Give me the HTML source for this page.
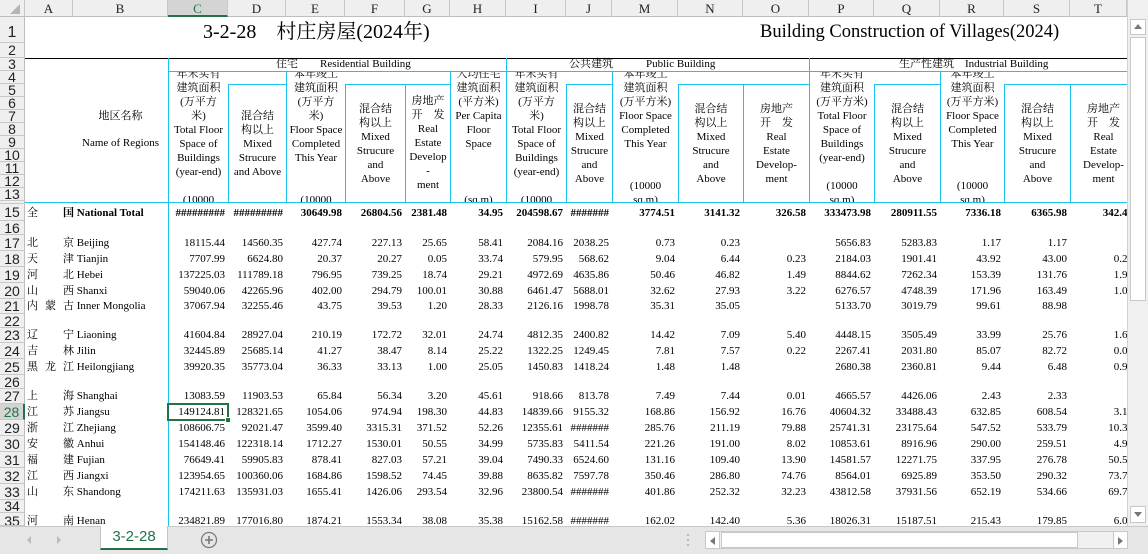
<!DOCTYPE html>
<html><head><meta charset="utf-8">
<style>
*{margin:0;padding:0;box-sizing:border-box}
html,body{width:1148px;height:554px;overflow:hidden}
body{background:#fff;position:relative;font-family:"Liberation Serif","Noto Serif CJK SC",serif;font-size:11px;color:#000}
.abs{position:absolute}
.ch{position:absolute;top:0;height:17px;background:#efefef;border-right:1px solid #c8c8c8;border-bottom:1px solid #bdbdbd;text-align:center;line-height:17px;font-size:13px;color:#222}
.rh{position:absolute;left:0;width:25px;background:#efefef;border-bottom:1px solid #c8c8c8;border-right:1px solid #bdbdbd;text-align:center;font-family:"Liberation Sans",sans-serif;font-size:14px;color:#222;overflow:hidden;display:flex;align-items:center;justify-content:center}
.sheet{position:absolute;left:25px;top:17px;width:1102px;height:509px;overflow:hidden}
.in{position:absolute;left:-25px;top:-17px;width:1152px;height:526px;overflow:hidden}
.vl{position:absolute;width:1px;background:#1cc3ee}
.hl{position:absolute;height:1px;background:#1cc3ee}
.hc{position:absolute;overflow:hidden}
.hc div{position:absolute;left:0;width:100%;text-align:center;line-height:14px;white-space:nowrap}
.r{position:absolute;left:0;width:1150px;white-space:nowrap}
.r span{position:absolute;top:0;text-align:right}
.r .a{left:27px}.r .b{left:63px;text-align:left}.r .k{left:45px}
.C{left:168px;width:57px}.D{left:228px;width:55px}.E{left:286px;width:56px}.F{left:345px;width:57px}
.G{left:405px;width:42px}.H{left:450px;width:53px}.I{left:506px;width:57px}.J{left:566px;width:43px}
.M{left:612px;width:63px}.N{left:678px;width:62px}.O{left:743px;width:63px}.P{left:809px;width:62px}
.Q{left:874px;width:63px}.R{left:940px;width:61px}.S{left:1004px;width:63px}.T{left:1070px;width:63px}
.bold{font-weight:bold}
</style></head><body>

<div class="ch" style="left:0;width:25px"><svg width="25" height="17" style="position:absolute;left:0;top:0"><polygon points="20,4 20,14 10,14" fill="#b5b5b5"/></svg></div>
<div class="ch" style="left:25px;width:48px">A</div>
<div class="ch" style="left:73px;width:95px">B</div>
<div class="ch" style="left:168px;width:60px;background:#d4d4d4;color:#217346;border-bottom:2px solid #217346">C</div>
<div class="ch" style="left:228px;width:58px">D</div>
<div class="ch" style="left:286px;width:59px">E</div>
<div class="ch" style="left:345px;width:60px">F</div>
<div class="ch" style="left:405px;width:45px">G</div>
<div class="ch" style="left:450px;width:56px">H</div>
<div class="ch" style="left:506px;width:60px">I</div>
<div class="ch" style="left:566px;width:46px">J</div>
<div class="ch" style="left:612px;width:66px">M</div>
<div class="ch" style="left:678px;width:65px">N</div>
<div class="ch" style="left:743px;width:66px">O</div>
<div class="ch" style="left:809px;width:65px">P</div>
<div class="ch" style="left:874px;width:66px">Q</div>
<div class="ch" style="left:940px;width:64px">R</div>
<div class="ch" style="left:1004px;width:66px">S</div>
<div class="ch" style="left:1070px;width:57px">T</div>

<div class="rh" style="top:17px;height:26px;font-size:16px;align-items:flex-end">1</div>
<div class="rh" style="top:43px;height:15px">2</div>
<div class="rh" style="top:58px;height:13px">3</div>
<div class="rh" style="top:71px;height:13px">4</div>
<div class="rh" style="top:84px;height:13px">5</div>
<div class="rh" style="top:97px;height:13px">6</div>
<div class="rh" style="top:110px;height:13px">7</div>
<div class="rh" style="top:123px;height:13px">8</div>
<div class="rh" style="top:136px;height:13px">9</div>
<div class="rh" style="top:149px;height:13px">10</div>
<div class="rh" style="top:162px;height:13px">11</div>
<div class="rh" style="top:175px;height:13px">12</div>
<div class="rh" style="top:188px;height:13px">13</div>
<div class="rh" style="top:201px;height:3px"></div>
<div class="rh" style="top:204px;height:17px">15</div>
<div class="rh" style="top:221px;height:14px">16</div>
<div class="rh" style="top:235px;height:16px">17</div>
<div class="rh" style="top:251px;height:16px">18</div>
<div class="rh" style="top:267px;height:16px">19</div>
<div class="rh" style="top:283px;height:16px">20</div>
<div class="rh" style="top:299px;height:15px">21</div>
<div class="rh" style="top:314px;height:14px">22</div>
<div class="rh" style="top:328px;height:15px">23</div>
<div class="rh" style="top:343px;height:16px">24</div>
<div class="rh" style="top:359px;height:16px">25</div>
<div class="rh" style="top:375px;height:14px">26</div>
<div class="rh" style="top:389px;height:15px">27</div>
<div class="rh" style="top:404px;height:16px;background:#d4d4d4;color:#217346;border-right:2px solid #217346">28</div>
<div class="rh" style="top:420px;height:16px">29</div>
<div class="rh" style="top:436px;height:16px">30</div>
<div class="rh" style="top:452px;height:16px">31</div>
<div class="rh" style="top:468px;height:16px">32</div>
<div class="rh" style="top:484px;height:16px">33</div>
<div class="rh" style="top:500px;height:13px">34</div>
<div class="rh" style="top:513px;height:13px;align-items:flex-start">35</div>

<div class="sheet"><div class="in">
<div class="abs" style="left:203px;top:20px;font-size:20px;line-height:24px;white-space:nowrap">3-2-28　村庄房屋(2024年)</div>
<div class="abs" style="left:760px;top:20px;font-size:18.5px;line-height:24px;white-space:nowrap">Building Construction of Villages(2024)</div>

<div class="abs" style="left:25px;top:58px;width:1110px;height:1px;background:#000"></div>
<div class="hl" style="left:25px;top:202px;width:1110px"></div>
<div class="hl" style="left:168px;top:71px;width:970px"></div>
<div class="hl" style="left:228px;top:84px;width:58px"></div>
<div class="hl" style="left:345px;top:84px;width:105px"></div>
<div class="hl" style="left:566px;top:84px;width:46px"></div>
<div class="hl" style="left:678px;top:84px;width:131px"></div>
<div class="hl" style="left:874px;top:84px;width:66px"></div>
<div class="hl" style="left:1004px;top:84px;width:130px"></div>
<div class="vl" style="left:168px;top:58px;height:470px"></div>
<div class="vl" style="left:506px;top:58px;height:144px"></div>
<div class="vl" style="left:809px;top:58px;height:144px"></div>
<div class="vl" style="left:286px;top:71px;height:131px"></div>
<div class="vl" style="left:450px;top:71px;height:131px"></div>
<div class="vl" style="left:612px;top:71px;height:131px"></div>
<div class="vl" style="left:940px;top:71px;height:131px"></div>
<div class="vl" style="left:228px;top:84px;height:118px"></div>
<div class="vl" style="left:345px;top:84px;height:118px"></div>
<div class="vl" style="left:405px;top:84px;height:118px"></div>
<div class="vl" style="left:566px;top:84px;height:118px"></div>
<div class="vl" style="left:678px;top:84px;height:118px"></div>
<div class="vl" style="left:743px;top:84px;height:118px"></div>
<div class="vl" style="left:874px;top:84px;height:118px"></div>
<div class="vl" style="left:1004px;top:84px;height:118px"></div>
<div class="vl" style="left:1070px;top:84px;height:118px"></div>

<div class="abs" style="left:276px;top:58px;line-height:13px;white-space:nowrap">住宅　　Residential Building</div>
<div class="abs" style="left:569px;top:58px;line-height:13px;white-space:nowrap">公共建筑　　　Public Building</div>
<div class="abs" style="left:899px;top:58px;line-height:13px;white-space:nowrap">生产性建筑　Industrial Building</div>

<div class="abs" style="left:73px;top:109px;width:95px;text-align:center;line-height:14px">地区名称</div>
<div class="abs" style="left:73px;top:136px;width:95px;text-align:center;line-height:14px;white-space:nowrap">Name of Regions</div>

<div class="hc" style="left:169px;top:72px;width:59px;height:130px"><div style="top:-5px">年末实有<br>建筑面积<br>(万平方<br>米)<br>Total Floor<br>Space of<br>Buildings<br>(year-end)<br>&nbsp;<br>(10000</div></div>
<div class="hc" style="left:229px;top:85px;width:57px;height:117px"><div style="top:24px">混合结<br>构以上<br>Mixed<br>Strucure<br>and Above</div></div>
<div class="hc" style="left:287px;top:72px;width:58px;height:130px"><div style="top:-5px">本年竣工<br>建筑面积<br>(万平方<br>米)<br>Floor Space<br>Completed<br>This Year<br>&nbsp;<br>&nbsp;<br>(10000</div></div>
<div class="hc" style="left:346px;top:85px;width:59px;height:117px"><div style="top:17px">混合结<br>构以上<br>Mixed<br>Strucure<br>and<br>Above</div></div>
<div class="hc" style="left:406px;top:85px;width:44px;height:117px"><div style="top:9px">房地产<br>开　发<br>Real<br>Estate<br>Develop<br>-<br>ment</div></div>
<div class="hc" style="left:451px;top:72px;width:55px;height:130px"><div style="top:-5px">人均住宅<br>建筑面积<br>(平方米)<br>Per Capita<br>Floor<br>Space<br>&nbsp;<br>&nbsp;<br>&nbsp;<br>(sq.m)</div></div>
<div class="hc" style="left:507px;top:72px;width:59px;height:130px"><div style="top:-5px">年末实有<br>建筑面积<br>(万平方<br>米)<br>Total Floor<br>Space of<br>Buildings<br>(year-end)<br>&nbsp;<br>(10000</div></div>
<div class="hc" style="left:567px;top:85px;width:45px;height:117px"><div style="top:17px">混合结<br>构以上<br>Mixed<br>Strucure<br>and<br>Above</div></div>
<div class="hc" style="left:613px;top:72px;width:65px;height:130px"><div style="top:-5px">本年竣工<br>建筑面积<br>(万平方米)<br>Floor Space<br>Completed<br>This Year<br>&nbsp;<br>&nbsp;<br>(10000<br>sq.m)</div></div>
<div class="hc" style="left:679px;top:85px;width:64px;height:117px"><div style="top:17px">混合结<br>构以上<br>Mixed<br>Strucure<br>and<br>Above</div></div>
<div class="hc" style="left:744px;top:85px;width:65px;height:117px"><div style="top:17px">房地产<br>开　发<br>Real<br>Estate<br>Develop-<br>ment</div></div>
<div class="hc" style="left:810px;top:72px;width:64px;height:130px"><div style="top:-5px">年末实有<br>建筑面积<br>(万平方米)<br>Total Floor<br>Space of<br>Buildings<br>(year-end)<br>&nbsp;<br>(10000<br>sq.m)</div></div>
<div class="hc" style="left:875px;top:85px;width:65px;height:117px"><div style="top:17px">混合结<br>构以上<br>Mixed<br>Strucure<br>and<br>Above</div></div>
<div class="hc" style="left:941px;top:72px;width:63px;height:130px"><div style="top:-5px">本年竣工<br>建筑面积<br>(万平方米)<br>Floor Space<br>Completed<br>This Year<br>&nbsp;<br>&nbsp;<br>(10000<br>sq.m)</div></div>
<div class="hc" style="left:1005px;top:85px;width:65px;height:117px"><div style="top:17px">混合结<br>构以上<br>Mixed<br>Strucure<br>and<br>Above</div></div>
<div class="hc" style="left:1071px;top:85px;width:65px;height:117px"><div style="top:17px">房地产<br>开　发<br>Real<br>Estate<br>Develop-<br>ment</div></div>

<div class="r bold" style="top:204px;height:17px;line-height:19px"><span class="a" style="font-weight:normal">全</span><span class="b">国 National Total</span><span class="C">#########</span><span class="D">#########</span><span class="E">30649.98</span><span class="F">26804.56</span><span class="G">2381.48</span><span class="H">34.95</span><span class="I">204598.67</span><span class="J">#######</span><span class="M">3774.51</span><span class="N">3141.32</span><span class="O">326.58</span><span class="P">333473.98</span><span class="Q">280911.55</span><span class="R">7336.18</span><span class="S">6365.98</span><span class="T">342.43</span></div>

<div class="r" style="top:235px;line-height:16px"><span class="a">北</span><span class="b">京 Beijing</span><span class="C">18115.44</span><span class="D">14560.35</span><span class="E">427.74</span><span class="F">227.13</span><span class="G">25.65</span><span class="H">58.41</span><span class="I">2084.16</span><span class="J">2038.25</span><span class="M">0.73</span><span class="N">0.23</span><span class="P">5656.83</span><span class="Q">5283.83</span><span class="R">1.17</span><span class="S">1.17</span></div>
<div class="r" style="top:251px;line-height:16px"><span class="a">天</span><span class="b">津 Tianjin</span><span class="C">7707.99</span><span class="D">6624.80</span><span class="E">20.37</span><span class="F">20.27</span><span class="G">0.05</span><span class="H">33.74</span><span class="I">579.95</span><span class="J">568.62</span><span class="M">9.04</span><span class="N">6.44</span><span class="O">0.23</span><span class="P">2184.03</span><span class="Q">1901.41</span><span class="R">43.92</span><span class="S">43.00</span><span class="T">0.24</span></div>
<div class="r" style="top:267px;line-height:16px"><span class="a">河</span><span class="b">北 Hebei</span><span class="C">137225.03</span><span class="D">111789.18</span><span class="E">796.95</span><span class="F">739.25</span><span class="G">18.74</span><span class="H">29.21</span><span class="I">4972.69</span><span class="J">4635.86</span><span class="M">50.46</span><span class="N">46.82</span><span class="O">1.49</span><span class="P">8844.62</span><span class="Q">7262.34</span><span class="R">153.39</span><span class="S">131.76</span><span class="T">1.92</span></div>
<div class="r" style="top:283px;line-height:16px"><span class="a">山</span><span class="b">西 Shanxi</span><span class="C">59040.06</span><span class="D">42265.96</span><span class="E">402.00</span><span class="F">294.79</span><span class="G">100.01</span><span class="H">30.88</span><span class="I">6461.47</span><span class="J">5688.01</span><span class="M">32.62</span><span class="N">27.93</span><span class="O">3.22</span><span class="P">6276.57</span><span class="Q">4748.39</span><span class="R">171.96</span><span class="S">163.49</span><span class="T">1.02</span></div>
<div class="r" style="top:299px;line-height:15px"><span class="a">内</span><span class="k" style="position:absolute">蒙</span><span class="b">古 Inner Mongolia</span><span class="C">37067.94</span><span class="D">32255.46</span><span class="E">43.75</span><span class="F">39.53</span><span class="G">1.20</span><span class="H">28.33</span><span class="I">2126.16</span><span class="J">1998.78</span><span class="M">35.31</span><span class="N">35.05</span><span class="P">5133.70</span><span class="Q">3019.79</span><span class="R">99.61</span><span class="S">88.98</span></div>

<div class="r" style="top:328px;line-height:15px"><span class="a">辽</span><span class="b">宁 Liaoning</span><span class="C">41604.84</span><span class="D">28927.04</span><span class="E">210.19</span><span class="F">172.72</span><span class="G">32.01</span><span class="H">24.74</span><span class="I">4812.35</span><span class="J">2400.82</span><span class="M">14.42</span><span class="N">7.09</span><span class="O">5.40</span><span class="P">4448.15</span><span class="Q">3505.49</span><span class="R">33.99</span><span class="S">25.76</span><span class="T">1.64</span></div>
<div class="r" style="top:343px;line-height:16px"><span class="a">吉</span><span class="b">林 Jilin</span><span class="C">32445.89</span><span class="D">25685.14</span><span class="E">41.27</span><span class="F">38.47</span><span class="G">8.14</span><span class="H">25.22</span><span class="I">1322.25</span><span class="J">1249.45</span><span class="M">7.81</span><span class="N">7.57</span><span class="O">0.22</span><span class="P">2267.41</span><span class="Q">2031.80</span><span class="R">85.07</span><span class="S">82.72</span><span class="T">0.02</span></div>
<div class="r" style="top:359px;line-height:16px"><span class="a">黑</span><span class="k" style="position:absolute">龙</span><span class="b">江 Heilongjiang</span><span class="C">39920.35</span><span class="D">35773.04</span><span class="E">36.33</span><span class="F">33.13</span><span class="G">1.00</span><span class="H">25.05</span><span class="I">1450.83</span><span class="J">1418.24</span><span class="M">1.48</span><span class="N">1.48</span><span class="P">2680.38</span><span class="Q">2360.81</span><span class="R">9.44</span><span class="S">6.48</span><span class="T">0.96</span></div>

<div class="r" style="top:389px;line-height:15px"><span class="a">上</span><span class="b">海 Shanghai</span><span class="C">13083.59</span><span class="D">11903.53</span><span class="E">65.84</span><span class="F">56.34</span><span class="G">3.20</span><span class="H">45.61</span><span class="I">918.66</span><span class="J">813.78</span><span class="M">7.49</span><span class="N">7.44</span><span class="O">0.01</span><span class="P">4665.57</span><span class="Q">4426.06</span><span class="R">2.43</span><span class="S">2.33</span></div>
<div class="r" style="top:404px;line-height:16px"><span class="a">江</span><span class="b">苏 Jiangsu</span><span class="C">149124.81</span><span class="D">128321.65</span><span class="E">1054.06</span><span class="F">974.94</span><span class="G">198.30</span><span class="H">44.83</span><span class="I">14839.66</span><span class="J">9155.32</span><span class="M">168.86</span><span class="N">156.92</span><span class="O">16.76</span><span class="P">40604.32</span><span class="Q">33488.43</span><span class="R">632.85</span><span class="S">608.54</span><span class="T">3.12</span></div>
<div class="r" style="top:420px;line-height:16px"><span class="a">浙</span><span class="b">江 Zhejiang</span><span class="C">108606.75</span><span class="D">92021.47</span><span class="E">3599.40</span><span class="F">3315.31</span><span class="G">371.52</span><span class="H">52.26</span><span class="I">12355.61</span><span class="J">#######</span><span class="M">285.76</span><span class="N">211.19</span><span class="O">79.88</span><span class="P">25741.31</span><span class="Q">23175.64</span><span class="R">547.52</span><span class="S">533.79</span><span class="T">10.35</span></div>
<div class="r" style="top:436px;line-height:16px"><span class="a">安</span><span class="b">徽 Anhui</span><span class="C">154148.46</span><span class="D">122318.14</span><span class="E">1712.27</span><span class="F">1530.01</span><span class="G">50.55</span><span class="H">34.99</span><span class="I">5735.83</span><span class="J">5411.54</span><span class="M">221.26</span><span class="N">191.00</span><span class="O">8.02</span><span class="P">10853.61</span><span class="Q">8916.96</span><span class="R">290.00</span><span class="S">259.51</span><span class="T">4.92</span></div>
<div class="r" style="top:452px;line-height:16px"><span class="a">福</span><span class="b">建 Fujian</span><span class="C">76649.41</span><span class="D">59905.83</span><span class="E">878.41</span><span class="F">827.03</span><span class="G">57.21</span><span class="H">39.04</span><span class="I">7490.33</span><span class="J">6524.60</span><span class="M">131.16</span><span class="N">109.40</span><span class="O">13.90</span><span class="P">14581.57</span><span class="Q">12271.75</span><span class="R">337.95</span><span class="S">276.78</span><span class="T">50.52</span></div>
<div class="r" style="top:468px;line-height:16px"><span class="a">江</span><span class="b">西 Jiangxi</span><span class="C">123954.65</span><span class="D">100360.06</span><span class="E">1684.86</span><span class="F">1598.52</span><span class="G">74.45</span><span class="H">39.88</span><span class="I">8635.82</span><span class="J">7597.78</span><span class="M">350.46</span><span class="N">286.80</span><span class="O">74.76</span><span class="P">8564.01</span><span class="Q">6925.89</span><span class="R">353.50</span><span class="S">290.32</span><span class="T">73.72</span></div>
<div class="r" style="top:484px;line-height:16px"><span class="a">山</span><span class="b">东 Shandong</span><span class="C">174211.63</span><span class="D">135931.03</span><span class="E">1655.41</span><span class="F">1426.06</span><span class="G">293.54</span><span class="H">32.96</span><span class="I">23800.54</span><span class="J">#######</span><span class="M">401.86</span><span class="N">252.32</span><span class="O">32.23</span><span class="P">43812.58</span><span class="Q">37931.56</span><span class="R">652.19</span><span class="S">534.66</span><span class="T">69.74</span></div>
<div class="r" style="top:513px;line-height:16px"><span class="a">河</span><span class="b">南 Henan</span><span class="C">234821.89</span><span class="D">177016.80</span><span class="E">1874.21</span><span class="F">1553.34</span><span class="G">38.08</span><span class="H">35.38</span><span class="I">15162.58</span><span class="J">#######</span><span class="M">162.02</span><span class="N">142.40</span><span class="O">5.36</span><span class="P">18026.31</span><span class="Q">15187.51</span><span class="R">215.43</span><span class="S">179.85</span><span class="T">6.02</span></div>

<div class="abs" style="left:167px;top:403px;width:62px;height:18px;border:2px solid #217346"></div>
<div class="abs" style="left:225px;top:417px;width:6px;height:6px;background:#217346;border:1px solid #fff"></div>
</div></div>

<div class="abs" style="left:1127px;top:0;width:21px;height:526px;background:#f0f0f0;border-left:1px solid #d0d0d0"></div>
<div class="abs" style="left:1130px;top:19px;width:16px;height:16px;background:#fff;border:1px solid #c8c8c8"></div>
<svg class="abs" style="left:1133px;top:23px" width="10" height="8"><polygon points="5,1 9,6 1,6" fill="#777"/></svg>
<div class="abs" style="left:1130px;top:37px;width:16px;height:264px;background:#fff;border:1px solid #c8c8c8"></div>
<div class="abs" style="left:1130px;top:506px;width:16px;height:17px;background:#fff;border:1px solid #c8c8c8"></div>
<svg class="abs" style="left:1133px;top:511px" width="10" height="8"><polygon points="1,1 9,1 5,6" fill="#777"/></svg>

<div class="abs" style="left:0;top:526px;width:1148px;height:28px;background:#e6e6e6;border-top:1px solid #c8c8c8"></div>
<svg class="abs" style="left:25px;top:534px" width="40" height="12"><polygon points="6,2 6,10 2,6" fill="#bbb"/><polygon points="32,2 32,10 36,6" fill="#bbb"/></svg>
<div class="abs" style="left:100px;top:526px;width:68px;height:24px;background:#fff;border:1px solid #c4c4c4;border-top:none;border-bottom:2px solid #217346;text-align:center;font-family:'Liberation Sans',sans-serif;font-size:15px;line-height:22px;color:#217346">3-2-28</div>
<svg class="abs" style="left:200px;top:531px" width="18" height="18"><circle cx="9" cy="9" r="7.5" fill="none" stroke="#777" stroke-width="1.2"/><path d="M9 5v8M5 9h8" stroke="#777" stroke-width="1.6"/></svg>
<svg class="abs" style="left:686px;top:533px" width="4" height="14"><circle cx="2" cy="2" r="1" fill="#aaa"/><circle cx="2" cy="7" r="1" fill="#aaa"/><circle cx="2" cy="12" r="1" fill="#aaa"/></svg>
<div class="abs" style="left:705px;top:531px;width:423px;height:18px;background:#f0f0f0;border:1px solid #c8c8c8"></div>
<div class="abs" style="left:706px;top:532px;width:14px;height:16px;background:#fff;border-right:1px solid #c8c8c8"></div>
<svg class="abs" style="left:709px;top:536px" width="8" height="10"><polygon points="6,1 6,9 1,5" fill="#777"/></svg>
<div class="abs" style="left:721px;top:532px;width:357px;height:16px;background:#fff;border:1px solid #c8c8c8"></div>
<div class="abs" style="left:1113px;top:532px;width:14px;height:16px;background:#fff;border-left:1px solid #c8c8c8"></div>
<svg class="abs" style="left:1116px;top:536px" width="8" height="10"><polygon points="2,1 2,9 7,5" fill="#777"/></svg>
</body></html>
